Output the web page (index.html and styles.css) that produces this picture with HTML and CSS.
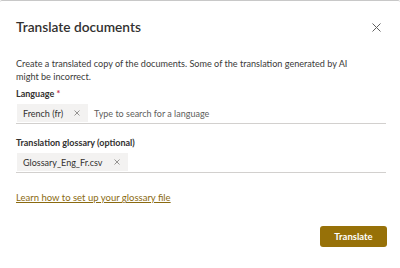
FILE: index.html
```html
<!DOCTYPE html>
<html lang="en">
<head>
<meta charset="utf-8">
<title>Translate documents</title>
<link rel="stylesheet" href="styles.css">
</head>
<body>
<div class="dialog">
  <div class="header">
    <h1 class="title">Translate documents</h1>
    <button class="close" aria-label="Close">
      <svg width="9" height="9" viewBox="0 0 9 9"><path d="M0.5 0.5L8.5 8.5M8.5 0.5L0.5 8.5" stroke="#616161" stroke-width="1" fill="none"/></svg>
    </button>
  </div>
  <p class="desc">Create a translated copy of the documents. Some of the translation generated by AI might be incorrect.</p>

  <div class="field">
    <div class="label">Language <span class="req">*</span></div>
    <div class="picker">
      <span class="chip">French (fr)<span class="chip-x"><svg width="6" height="6" viewBox="0 0 6 6"><path d="M0.5 0.5L5.5 5.5M5.5 0.5L0.5 5.5" stroke="#8a8886" stroke-width="0.9" fill="none"/></svg></span></span>
      <span class="placeholder">Type to search for a language</span>
    </div>
  </div>

  <div class="field">
    <div class="label">Translation glossary (optional)</div>
    <div class="picker">
      <span class="chip">Glossary_Eng_Fr.csv<span class="chip-x"><svg width="6" height="6" viewBox="0 0 6 6"><path d="M0.5 0.5L5.5 5.5M5.5 0.5L0.5 5.5" stroke="#8a8886" stroke-width="0.9" fill="none"/></svg></span></span>
    </div>
  </div>

  <a class="link" href="#">Learn how to set up your glossary file</a>

  <div class="footer">
    <button class="primary">Translate</button>
  </div>
</div>
</body>
</html>
```

FILE: styles.css
```css
html, body {
  margin: 0;
  padding: 0;
  background: #ffffff;
}
body {
  font-family: Lato, "Open Sans", sans-serif;
  color: #323130;
}
.dialog {
  border-top: 1px solid #c8c8c8;
  border-radius: 2px 2px 0 0;
  padding: 0 14px 0 16px;
  height: 267px;
  box-sizing: border-box;
}
.header {
  display: flex;
  justify-content: space-between;
  align-items: center;
  padding-top: 16px;
}
.title {
  margin: 0;
  font-size: 13.7px;
  font-weight: 600;
  line-height: 20px;
  color: #323130;
}
.close {
  border: 0;
  background: none;
  padding: 0;
  margin-right: 5px;
  width: 9px;
  height: 9px;
  display: flex;
}
.desc {
  margin: 20px 0 0 0;
  max-width: 350px;
  font-size: 9.1px;
  line-height: 13px;
  color: #3b3a39;
}
.field {
  margin-top: 4px;
}
.field + .field {
  margin-top: 12px;
}
.label {
  font-size: 9px;
  font-weight: 700;
  line-height: 13px;
  color: #323130;
}
.req {
  color: #c4314b;
}
.picker {
  display: flex;
  align-items: center;
  gap: 6px;
  margin-top: 4px;
  padding: 0 0 1px 1px;
  border-bottom: 1px solid #d2d0ce;
}
.chip {
  display: inline-flex;
  align-items: center;
  height: 18px;
  padding: 0 8px 0 6px;
  background: #f3f2f1;
  font-size: 9px;
  color: #323130;
}
.chip-x {
  display: inline-flex;
  margin-left: 11px;
}
.placeholder {
  font-size: 9px;
  color: #605e5c;
}
.link {
  display: inline-block;
  margin-top: 18px;
  font-size: 9.5px;
  line-height: 13px;
  color: #8a6a10;
  text-decoration: underline;
}
.footer {
  display: flex;
  justify-content: flex-end;
  margin-top: 22px;
  margin-right: -1px;
}
.primary {
  width: 67px;
  height: 21px;
  border: 0;
  border-radius: 3px;
  background: #977108;
  color: #ffffff;
  font-family: Lato, "Open Sans", sans-serif;
  font-size: 9.5px;
  font-weight: 700;
}
```
